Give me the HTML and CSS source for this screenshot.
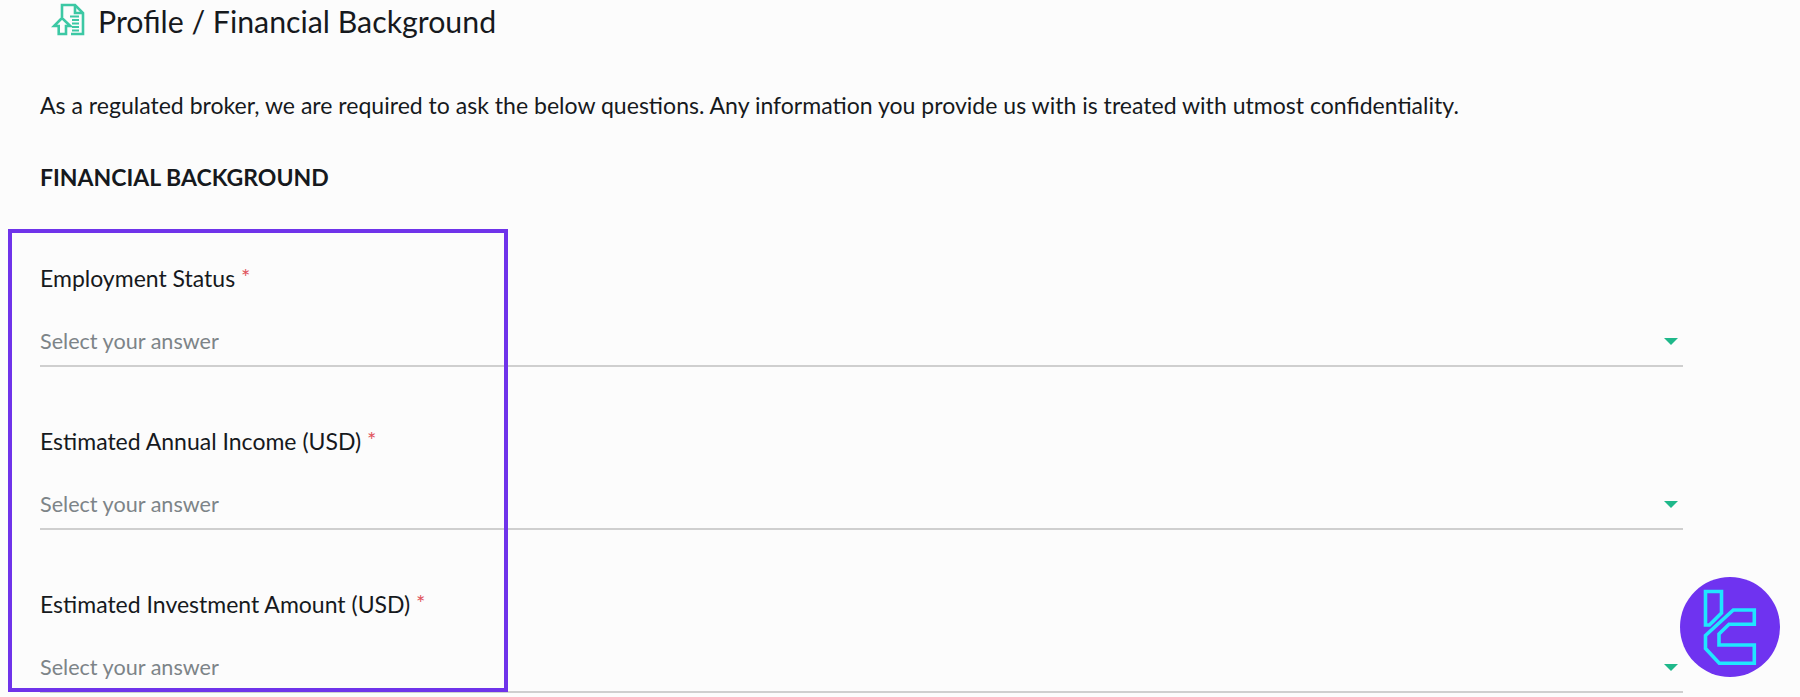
FILE: index.html
```html
<!DOCTYPE html>
<html>
<head>
  <title>Profile / Financial Background</title>
  <meta content="width=device-width, initial-scale=1" name="viewport" />
  <link rel="stylesheet" href="styles.css">
</head>
<body>
  <div class="page">
    <div class="pageTitle">
      <svg class="titleIcon" viewBox="0 0 36 38" fill="none" stroke="#3cc8a4" stroke-width="2.600">
        <path d="M11 16V4h13l8 8v21H20" />
        <path d="M24 4v8h8" />
        <path d="M11 17l-8 8h4.700v8H15v-8h4.300z" />
        <path d="M19 15.500h9M21 19h7M21 22.500h7M21 26h7M21 29.500h7" stroke-width="1.800" />
      </svg>
      <h1>Profile / Financial Background</h1>
    </div>

    <p class="intro">As a regulated broker, we are required to ask the below questions. Any information you provide us with is treated with utmost confidentiality.</p>

    <h2>FINANCIAL BACKGROUND</h2>

    <form class="questions">
      <div class="field">
        <label>Employment Status <span class="required">*</span></label>
        <div class="selectBox">
          <span>Select your answer</span>
          <i class="caret"></i>
        </div>
      </div>
      <div class="field">
        <label>Estimated Annual Income (USD) <span class="required">*</span></label>
        <div class="selectBox">
          <span>Select your answer</span>
          <i class="caret"></i>
        </div>
      </div>
      <div class="field">
        <label>Estimated Investment Amount (USD) <span class="required">*</span></label>
        <div class="selectBox">
          <span>Select your answer</span>
          <i class="caret"></i>
        </div>
      </div>
    </form>

    <div class="highlight"></div>

    <svg class="badge" viewBox="0 0 100 100" fill="none" stroke="#1fe6ff" stroke-width="3.600">
      <circle cx="50" cy="50" r="50" fill="#6f33f0" stroke="none" />
      <path d="M25.500 14.500h16V36l-12 12h-4z" />
      <path d="M53.300 33h21v14.300H49L39 57v11h35.300v18.300h-35L25.500 71.500v-13z" />
    </svg>
  </div>
</body>
</html>
```

FILE: styles.css
```css
html, body {
  margin: 0;
  height: 100%;
}
body {
  background-color: #fcfcfc;
  color: #16191d;
  font-family: Lato, "Open Sans", sans-serif;
}
.page {
  position: relative;
  height: 697px;
  overflow: hidden;
  padding-left: 40px;
  padding-right: 117px;
  box-sizing: border-box;
}
.pageTitle {
  display: flex;
  align-items: center;
  height: 42px;
  padding-left: 10px;
}
.titleIcon {
  width: 36px;
  height: 38px;
  margin-top: -3px;
  margin-left: 1px;
  margin-right: 11px;
}
h1 {
  margin: 0;
  font-size: 30.300px;
  font-weight: 400;
}
.intro {
  margin: 0;
  padding-top: 50px;
  font-size: 23.060px;
  line-height: 26px;
}
h2 {
  margin: 0;
  padding-top: 46px;
  font-size: 23px;
  font-weight: 700;
  line-height: 26px;
}
.questions {
  padding-top: 75px;
}
.field {
  height: 163px;
}
label {
  display: block;
  height: 56px;
  font-size: 23px;
  line-height: 26px;
}
.required {
  color: #e0525c;
  font-size: 22px;
  line-height: 20px;
  vertical-align: 2px;
}
.selectBox {
  display: flex;
  align-items: center;
  justify-content: space-between;
  height: 40px;
  border-bottom: 2px solid #cfcfcf;
  padding-bottom: 4px;
  color: #7d8488;
  font-size: 21.600px;
}
.caret {
  width: 0;
  height: 0;
  margin-right: 5px;
  border-left: 7px solid transparent;
  border-right: 7px solid transparent;
  border-top: 7px solid #1fb88a;
}
.highlight {
  position: absolute;
  left: 8px;
  top: 229px;
  width: 500px;
  height: 463px;
  border: 4px solid #6f33ea;
  box-sizing: border-box;
}
.badge {
  position: absolute;
  left: 1680px;
  top: 577px;
  width: 100px;
  height: 100px;
}
```
